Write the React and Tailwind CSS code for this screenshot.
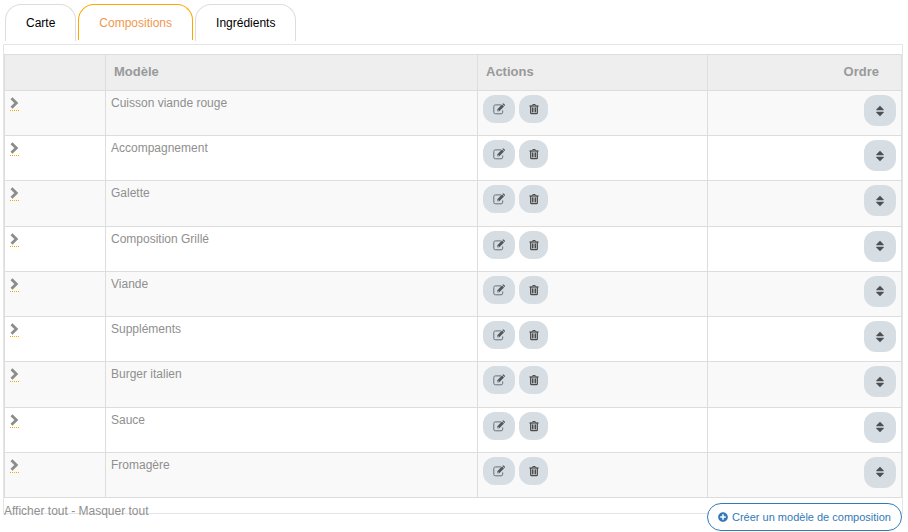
import { useState } from "react"
import { FaPlusCircle } from "react-icons/fa"

const tabs = ["Carte", "Compositions", "Ingrédients"]

const initialModels = [
  "Cuisson viande rouge",
  "Accompagnement",
  "Galette",
  "Composition Grillé",
  "Viande",
  "Suppléments",
  "Burger italien",
  "Sauce",
  "Fromagère",
]

const ChevronIcon = () => (
  <svg viewBox="0 0 9 12" className="w-[9px] h-3" fill="none" stroke="#8c8c8c" strokeWidth="2.8">
    <path d="M1.500 1.200 6.300 6 1.500 10.800" />
  </svg>
)

const EditIcon = () => (
  <svg viewBox="0 0 12 12" className="w-3 h-3" fill="none">
    <path d="M8 1.900H2.400A1.600 1.600 0 0 0 .8 3.500v5.700a1.600 1.600 0 0 0 1.600 1.600h5.700a1.600 1.600 0 0 0 1.600-1.600V7.400" stroke="#6b7178" />
    <path d="M4.300 8.300V6.200L9 1.500l2 2-4.700 4.800z" fill="#50565c" />
    <path d="m9.400 1.100.5-.5q.4-.3.8 0l1.200 1.200q.3.4 0 .8l-.5.5z" fill="#50565c" />
    <path d="M5 6.700v.9h.9" stroke="#d6dde3" strokeWidth=".6" />
  </svg>
)

const TrashIcon = () => (
  <svg viewBox="0 0 10 12" className="w-[10px] h-3" fill="none" stroke="#4c4c4c">
    <path d="M.5 3h9" strokeWidth="1.300" />
    <path d="M3.300 2.700 3.800 1.500h2.400l.5 1.200" />
    <path d="M1.700 3v6.800q0 .9.8.9h5q.8 0 .8-.9V3" strokeWidth="1.300" />
    <path d="M3.500 4.400v5M5 4.400v5M6.500 4.400v5" />
  </svg>
)

const SortIcon = () => (
  <svg viewBox="0 0 8 12" className="w-2 h-3" fill="#4b5055">
    <path d="M4 .7 7.700 4.600q.3.6-.3.6H.6Q0 5.200.3 4.600z" />
    <path d="M4 11.300 7.700 7.400q.3-.6-.3-.6H.6Q0 6.800.3 7.400z" />
  </svg>
)

const ModelRow = ({ name, onDelete, onMove }) => (
  <tr className="align-top odd:bg-[#f9f9f9] even:bg-white">
    <td className="h-[45px] border border-[#ddd] px-[5px] pt-[6px]">
      <button className="block cursor-pointer border-b border-dotted border-[#ffa500] pb-px" aria-label={`Afficher ${name}`}>
        <ChevronIcon />
      </button>
    </td>
    <td className="border border-[#ddd] px-[5px] pt-1">{name}</td>
    <td className="border border-[#ddd] px-[5px] pt-1">
      <div className="flex gap-1">
        <button
          className="flex h-7 w-8 cursor-pointer items-center justify-center rounded-xl bg-[#d6dde3]"
          aria-label={`Modifier ${name}`}
        >
          <EditIcon />
        </button>
        <button
          className="flex h-7 w-[29px] cursor-pointer items-center justify-center rounded-xl bg-[#d6dde3]"
          aria-label={`Supprimer ${name}`}
          onClick={onDelete}
        >
          <TrashIcon />
        </button>
      </div>
    </td>
    <td className="border border-[#ddd] px-[5px] pt-1">
      <button
        className="ml-auto flex h-[31px] w-8 cursor-pointer items-center justify-center rounded-xl bg-[#d6dde3]"
        aria-label={`Déplacer ${name}`}
        onClick={onMove}
      >
        <SortIcon />
      </button>
    </td>
  </tr>
)

const App = () => {
  const [activeTab, setActiveTab] = useState("Compositions")
  const [models, setModels] = useState(initialModels)

  const moveDown = (index) => {
    if (index === models.length - 1) return
    const next = [...models]
    next.splice(index + 1, 0, next.splice(index, 1)[0])
    setModels(next)
  }

  return (
    <div className="bg-white pl-[3px] pr-[5px] pt-1 font-['Liberation_Sans',Arial,sans-serif] text-xs text-[#8f8f8f]">
      <div className="flex h-10 items-start gap-[2px] pl-[2px]" role="tablist">
        {tabs.map((tab) => (
          <button
            key={tab}
            role="tab"
            aria-selected={tab === activeTab}
            className={`cursor-pointer rounded-t-2xl border border-b-0 px-5 ${
              tab === activeTab ? "h-9 border-[#ffa500] text-[#f0984f]" : "h-[37px] border-[#ddd] text-black"
            }`}
            onClick={() => setActiveTab(tab)}
          >
            {tab}
          </button>
        ))}
      </div>

      <div className="border border-[#e5e5e5] pb-[15px] pt-[9px]">
        <table className="h-[444px] w-full table-fixed border-collapse">
          <thead>
            <tr className="h-9 bg-[#eee] text-[13px] text-[#999]">
              <th className="w-[101px] border border-[#ddd]"></th>
              <th className="border border-[#ddd] px-2 pb-[2px] text-left">Modèle</th>
              <th className="w-[230px] border border-[#ddd] px-2 pb-[2px] text-left">Actions</th>
              <th className="w-[194px] border border-[#ddd] px-[22px] pb-[2px] text-right">Ordre</th>
            </tr>
          </thead>
          <tbody>
            {models.map((name, index) => (
              <ModelRow
                key={name}
                name={name}
                onDelete={() => setModels(models.filter((model) => model !== name))}
                onMove={() => moveDown(index)}
              />
            ))}
          </tbody>
        </table>
      </div>

      <div className="-mt-[11px] flex items-start justify-between px-px">
        <div>
          <button className="cursor-pointer">Afficher tout</button>
          {" - "}
          <button className="cursor-pointer">Masquer tout</button>
        </div>
        <button className="flex h-7 cursor-pointer items-center gap-1 rounded-2xl border border-[#337ab7] bg-white px-[10px] text-[11px] text-[#337ab7]">
          <FaPlusCircle className="size-[10px]" />
          Créer un modèle de composition
        </button>
      </div>
    </div>
  )
}

export default App
